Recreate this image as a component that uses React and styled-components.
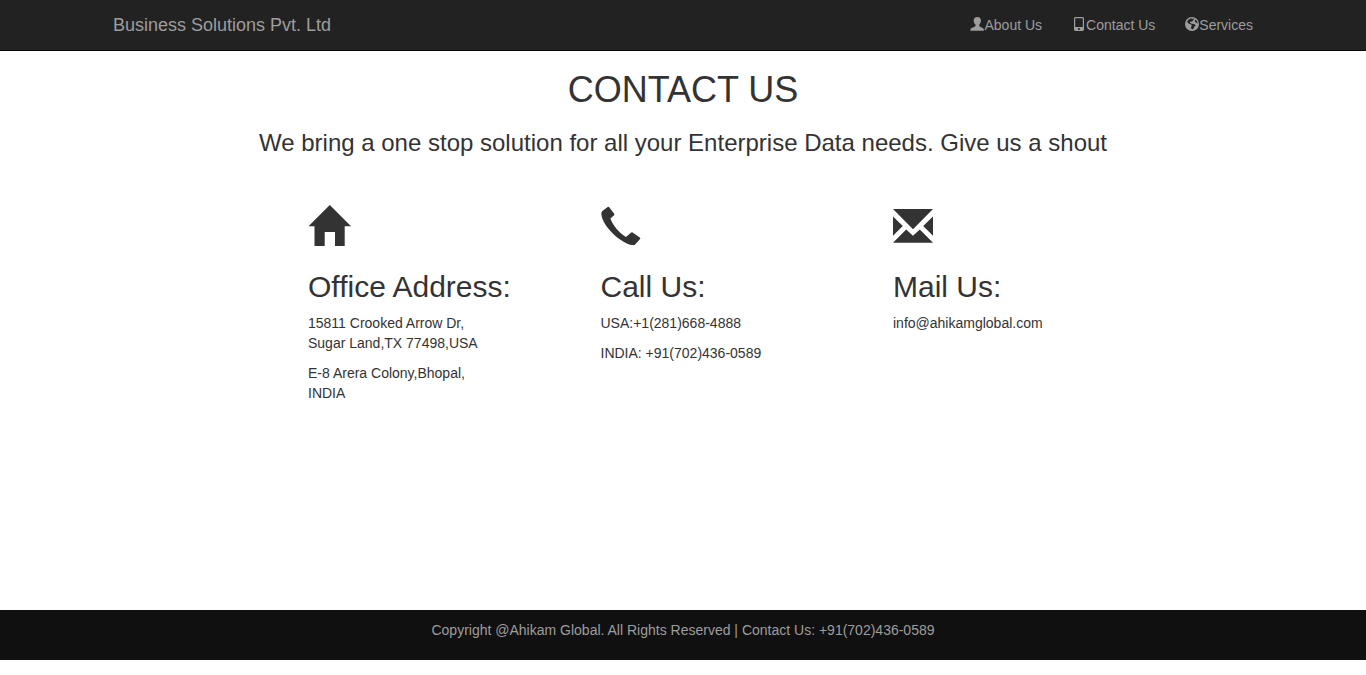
import React from 'react';
import styled, { createGlobalStyle } from 'styled-components';

const GlobalStyle = createGlobalStyle`
  *, *::before, *::after { box-sizing: border-box; }
  body {
    margin: 0;
    background: #fff;
    color: #333;
    font-family: "Helvetica Neue", "Liberation Sans", Arial, sans-serif;
    font-size: 14px;
    line-height: 20px;
  }
`;

const Navbar = styled.header`
  background: #222;
  border-bottom: 1px solid #080808;
`;

const NavInner = styled.div`
  display: flex;
  justify-content: space-between;
  max-width: 1170px;
  margin: 0 auto;
`;

const Brand = styled.a`
  padding: 15px;
  font-size: 18px;
  color: #9d9d9d;
  text-decoration: none;
`;

const NavList = styled.ul`
  display: flex;
  margin: 0;
  padding: 0;
  list-style: none;
`;

const NavLink = styled.a`
  display: flex;
  align-items: center;
  padding: 15px;
  color: #9d9d9d;
  text-decoration: none;
  &:hover { color: #fff; }
`;

const NavIcon = styled.svg`
  display: block;
  width: 14px;
  height: 14px;
  margin-bottom: 2px;
  fill: currentColor;
`;

const Main = styled.main`
  max-width: 1170px;
  min-height: calc(100vh - 116px);
  margin: 0 auto;
  padding-top: 19px;
`;

const Title = styled.h1`
  margin: 0 0 20px;
  font-size: 36px;
  line-height: 40px;
  font-weight: 500;
  text-align: center;
`;

const Subtitle = styled.h3`
  margin: 0 0 49px;
  font-size: 24px;
  line-height: 26px;
  font-weight: 500;
  text-align: center;
`;

const ContactGrid = styled.div`
  display: grid;
  grid-template-columns: 2fr 3fr 3fr 3fr 1fr;
`;

const ContactColumn = styled.section`
  padding: 0 15px;
  &:first-child { grid-column: 2; }
`;

const ContactIcon = styled.svg`
  display: block;
  width: 44px;
  height: 44px;
  fill: #333;
`;

const Heading = styled.h2`
  margin: 21px 0 10px;
  font-size: 30px;
  line-height: 33px;
  font-weight: 500;
`;

const Text = styled.p`
  margin: 0 0 10px;
`;

const Footer = styled.footer`
  min-height: 50px;
  padding: 10px 15px;
  background: #101010;
  color: #9d9d9d;
  text-align: center;
`;

const UserIcon = () => (
  <NavIcon viewBox="0 0 14 14" aria-hidden="true">
    <path d="M7.4 0C9.8 0 11 1.3 10.8 3.3C11.1 3.5 11.1 4.7 10.6 5C10.4 6.3 9.7 7.1 9.3 7.6V9.1C9.5 10 13.2 10.8 13.8 12.2L14 13.8H.3L.5 12.2C1.2 10.8 5.2 10 5.5 9.1V7.6C4.9 7.1 4.2 6.3 4 5C3.6 4.7 3.5 3.5 3.8 3.3C3.7 1.3 5 0 7.4 0Z" />
  </NavIcon>
);

const PhoneIcon = () => (
  <NavIcon viewBox="0 0 14 14" aria-hidden="true">
    <path fillRule="evenodd" d="M3.5 0H10.5C11.3 0 12 .6 12 1.4V12.6C12 13.4 11.3 14 10.5 14H3.5C2.7 14 2 13.4 2 12.6V1.4C2 .6 2.7 0 3.5 0ZM3.2 1.2V10H10.8V1.2ZM6 11.3V12.7H8V11.3Z" />
  </NavIcon>
);

const GlobeIcon = () => (
  <NavIcon viewBox="0 0 14 14" aria-hidden="true">
    <path fillRule="evenodd" d="M7 0A7 7 0 1 1 7 14A7 7 0 0 1 7 0ZM6.4 1.3L5 1.7L3.5 2.8L2.3 4.2L2.6 5.5L3.6 6.6L4.8 7L6.2 7.4L6.8 8.5L6.1 9.9L6.3 11.7L7.2 12.5L8.6 11.4L9.1 10L10.7 8.5L9.7 7.3L8.2 6.7L6.9 6.9L6 6.2L4.9 6.1L5.1 4.7L6.2 4.5L6.9 5L7.5 3.8L8.8 3.2L8.1 2.3L9.3 1.8L8.1 1.2L7.1 2.2ZM10.5 2.6L9.7 3.9L10.3 5.3L11.4 5.6L12.1 6.8L12.6 6.1L12 4.2Z" />
  </NavIcon>
);

const HomeIcon = () => (
  <ContactIcon viewBox="0 0 44 44" aria-hidden="true">
    <path d="M21.8 0L43 21.3H36.7V41H27V27H16.7V41H6.5V21.3H.5Z" />
  </ContactIcon>
);

const CallIcon = () => (
  <ContactIcon viewBox="0 0 44 44" aria-hidden="true">
    <path d="M7 1.8Q7.7 1.4 8.2 2.2L13.2 8.7Q13.8 9.5 13.1 10.3L9.4 13.5C12 20.5 17.8 27.8 25 31.9L29.9 27.8Q30.7 27 31.6 27.6L38.8 32.5Q39.8 33.2 39 34.1L34.4 39.2C33.8 40 32.5 40.2 31 40C21.5 38.6 3.6 24 .7 11.2C.2 8.7 .2 7.2 1.4 6.1Z" />
  </ContactIcon>
);

const MailIcon = () => (
  <ContactIcon viewBox="0 0 44 44" aria-hidden="true">
    <path d="M0 4H40L20 24.3ZM0 11.6L9.8 21L0 30.7ZM40 11.6V30.7L30.2 21ZM13.2 24.4L20 30.8L26.8 24.4L40 37.7H0Z" />
  </ContactIcon>
);

export default function App() {
  return (
    <>
      <GlobalStyle />
      <Navbar>
        <NavInner>
          <Brand href="#">Business Solutions Pvt. Ltd</Brand>
          <nav>
            <NavList>
              <li><NavLink href="#about"><UserIcon />About Us</NavLink></li>
              <li><NavLink href="#contact"><PhoneIcon />Contact Us</NavLink></li>
              <li><NavLink href="#services"><GlobeIcon />Services</NavLink></li>
            </NavList>
          </nav>
        </NavInner>
      </Navbar>
      <Main>
        <Title>CONTACT US</Title>
        <Subtitle>We bring a one stop solution for all your Enterprise Data needs. Give us a shout</Subtitle>
        <ContactGrid>
          <ContactColumn>
            <HomeIcon />
            <Heading>Office Address:</Heading>
            <Text>15811 Crooked Arrow Dr,<br />Sugar Land,TX 77498,USA</Text>
            <Text>E-8 Arera Colony,Bhopal,<br />INDIA</Text>
          </ContactColumn>
          <ContactColumn>
            <CallIcon />
            <Heading>Call Us:</Heading>
            <Text>USA:+1(281)668-4888</Text>
            <Text>INDIA: +91(702)436-0589</Text>
          </ContactColumn>
          <ContactColumn>
            <MailIcon />
            <Heading>Mail Us:</Heading>
            <Text>info@ahikamglobal.com</Text>
          </ContactColumn>
        </ContactGrid>
      </Main>
      <Footer>Copyright @Ahikam Global. All Rights Reserved | Contact Us: +91(702)436-0589</Footer>
    </>
  );
}
